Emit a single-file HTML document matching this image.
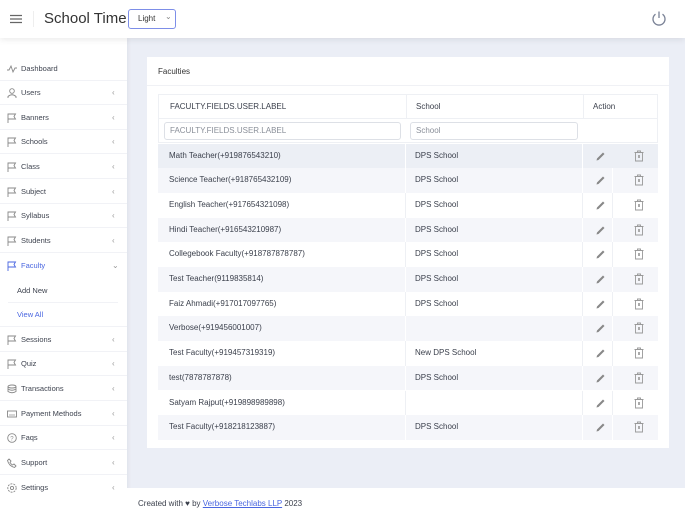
<!DOCTYPE html>
<html style="overflow:hidden;height:515px"><head><meta charset="utf-8"><style>
*{box-sizing:border-box;margin:0;padding:0}
body{width:685px;height:515px;overflow:hidden;background:#ebeef6;font-family:"Liberation Sans",sans-serif;color:#3a3f4b;position:relative}
.hdr{position:absolute;left:0;top:0;width:685px;height:38px;background:#fff;box-shadow:0 2px 6px rgba(0,0,0,.08);z-index:2}
.side{position:absolute;left:0;top:38px;width:127px;height:477px;background:#fff;box-shadow:1px 0 4px rgba(0,0,0,.06)}
.si{position:absolute;left:0;width:127px;height:24px;font-size:7.5px;color:#3f4450;border-bottom:1px solid #f1f2f6;line-height:24px;padding-left:21px}
.si svg{position:absolute;left:7px;top:7px}
.si .ch{position:absolute;left:112px;top:0;color:#999;font-size:8px}
.card{position:absolute;left:147px;top:57px;width:522px;height:391px;background:#fff}
.row{position:absolute;left:158px;width:500px;height:24.7px;font-size:8px;line-height:24.7px}
.c1{position:absolute;left:11px}
.c2{position:absolute;left:257px}
.sep{position:absolute;top:0;bottom:0;width:1px;background:#eef0f4}
.foot{position:absolute;left:127px;top:488px;width:558px;height:27px;background:#fff;font-size:8px;padding-left:11px;line-height:32px;color:#3a3f4b}
</style></head><body>
<div class="hdr">
<svg style="position:absolute;left:10px;top:14px" width="12" height="10"><path d="M0 1.5H12M0 5H12M0 8.5H12" stroke="#666" stroke-width="1.3"/></svg>
<div style="position:absolute;left:33px;top:11px;width:1px;height:16px;background:#eee"></div>
<div style="position:absolute;left:44px;top:10px;font-size:15px;line-height:18px;color:#333;white-space:nowrap">School Time</div>
<div style="position:absolute;left:128px;top:9px;width:48px;height:20px;border:1px solid #7d8ee8;border-radius:3px;font-size:8px;line-height:18px;padding-left:9px;color:#333">Light<span style="position:absolute;left:36px;top:-2px;color:#888;font-size:8px">&#8964;</span></div>
<svg style="position:absolute;left:651px;top:10px" width="16" height="17" viewBox="0 0 16 17"><path d="M4.5 4.2A6 6 0 1 0 11.5 4.2" fill="none" stroke="#7a8296" stroke-width="1.3"/><path d="M8 1.5V8" stroke="#7a8296" stroke-width="1.3"/></svg>
</div>
<div class="side">
<div class="si" style="top:19px"><svg width="10" height="10"><path d="M0 6H2L4 2L6 8L8 4H10" fill="none" stroke="#888" stroke-width="0.9"/></svg>Dashboard</div>
<div class="si" style="top:43px"><svg width="10" height="10"><circle cx="5" cy="3" r="2.3" fill="none" stroke="#888" stroke-width="0.9"/><path d="M1 10V8.5Q5 5 9 8.5V10" fill="none" stroke="#888" stroke-width="0.9"/></svg>Users<span class="ch">‹</span></div>
<div class="si" style="top:68px"><svg width="10" height="10"><path d="M1 10V1H8.5L7 3.5L8.5 6H1" fill="none" stroke="#888" stroke-width="0.9"/></svg>Banners<span class="ch">‹</span></div>
<div class="si" style="top:92px"><svg width="10" height="10"><path d="M1 10V1H8.5L7 3.5L8.5 6H1" fill="none" stroke="#888" stroke-width="0.9"/></svg>Schools<span class="ch">‹</span></div>
<div class="si" style="top:117px"><svg width="10" height="10"><path d="M1 10V1H8.5L7 3.5L8.5 6H1" fill="none" stroke="#888" stroke-width="0.9"/></svg>Class<span class="ch">‹</span></div>
<div class="si" style="top:142px"><svg width="10" height="10"><path d="M1 10V1H8.5L7 3.5L8.5 6H1" fill="none" stroke="#888" stroke-width="0.9"/></svg>Subject<span class="ch">‹</span></div>
<div class="si" style="top:166px"><svg width="10" height="10"><path d="M1 10V1H8.5L7 3.5L8.5 6H1" fill="none" stroke="#888" stroke-width="0.9"/></svg>Syllabus<span class="ch">‹</span></div>
<div class="si" style="top:191px"><svg width="10" height="10"><path d="M1 10V1H8.5L7 3.5L8.5 6H1" fill="none" stroke="#888" stroke-width="0.9"/></svg>Students<span class="ch">‹</span></div>
<div class="si" style="top:216px;color:#4a66e0;border:none"><svg width="10" height="10"><path d="M1 10V1H8.5L7 3.5L8.5 6H1" fill="none" stroke="#4a66e0" stroke-width="0.9"/></svg>Faculty<span class="ch">&#8964;</span></div>
<div class="si" style="top:241px;padding-left:17px;border:none">Add New</div>
<div style="position:absolute;left:8px;top:264px;width:110px;height:1px;background:#f1f2f6"></div>
<div class="si" style="top:265px;padding-left:17px;color:#4a66e0">View All</div>
<div class="si" style="top:290px"><svg width="10" height="10"><path d="M1 10V1H8.5L7 3.5L8.5 6H1" fill="none" stroke="#888" stroke-width="0.9"/></svg>Sessions<span class="ch">‹</span></div>
<div class="si" style="top:314px"><svg width="10" height="10"><path d="M1 10V1H8.5L7 3.5L8.5 6H1" fill="none" stroke="#888" stroke-width="0.9"/></svg>Quiz<span class="ch">‹</span></div>
<div class="si" style="top:339px"><svg width="10" height="10"><ellipse cx="5" cy="2.5" rx="4" ry="1.5" fill="none" stroke="#888" stroke-width="0.9"/><path d="M1 2.5V7.5Q5 10 9 7.5V2.5M1 5Q5 7.5 9 5" fill="none" stroke="#888" stroke-width="0.9"/></svg>Transactions<span class="ch">‹</span></div>
<div class="si" style="top:364px"><svg width="10" height="10"><rect x="0.5" y="2" width="9" height="6" fill="none" stroke="#888" stroke-width="0.9"/><path d="M2 6H8" stroke="#888" stroke-width="0.7"/></svg>Payment Methods<span class="ch">‹</span></div>
<div class="si" style="top:388px"><svg width="10" height="10"><circle cx="5" cy="5" r="4.3" fill="none" stroke="#888" stroke-width="0.9"/><text x="3.3" y="7.5" font-size="6" fill="#888">?</text></svg>Faqs<span class="ch">‹</span></div>
<div class="si" style="top:413px"><svg width="10" height="10"><path d="M2 1L4 3L3 4.5Q4.5 6.5 5.5 7L7 6L9 8L7.5 9.5Q2 8 0.5 2.5Z" fill="none" stroke="#888" stroke-width="0.9"/></svg>Support<span class="ch">‹</span></div>
<div class="si" style="top:438px;border:none"><svg width="10" height="10"><circle cx="5" cy="5" r="4.2" fill="none" stroke="#888" stroke-width="0.9" stroke-dasharray="2 1"/><circle cx="5" cy="5" r="1.6" fill="none" stroke="#888" stroke-width="0.9"/></svg>Settings<span class="ch">‹</span></div>
</div>
<div class="card">
<div style="position:absolute;left:11px;top:10px;font-size:8px;color:#333">Faculties</div>
<div style="position:absolute;left:0;top:28px;width:522px;height:1px;background:#f0f1f5"></div>
</div>
<div class="row" style="top:94px;border:1px solid #eef0f4"><span class="c1">FACULTY.FIELDS.USER.LABEL</span><span class="c2">School</span><span style="position:absolute;left:434px">Action</span><div class="sep" style="left:247px"></div><div class="sep" style="left:424px"></div></div>
<div class="row" style="top:118px;border:1px solid #eef0f4;border-top:none">
<div style="position:absolute;left:5px;top:4px;width:237px;height:18px;border:1px solid #dde0e6;border-radius:3px;line-height:16px;padding-left:5px;color:#8a8f99">FACULTY.FIELDS.USER.LABEL</div>
<div style="position:absolute;left:251px;top:4px;width:168px;height:18px;border:1px solid #dde0e6;border-radius:3px;line-height:16px;padding-left:5px;color:#8a8f99">School</div>
</div>
<div id="rows"></div>
<div class="foot">Created with &#9829; by <span style="color:#4a66e0;text-decoration:underline">Verbose Techlabs LLP</span> 2023</div>
<script>
var d=[["Math Teacher(+919876543210)","DPS School"],["Science Teacher(+918765432109)","DPS School"],["English Teacher(+917654321098)","DPS School"],["Hindi Teacher(+916543210987)","DPS School"],["Collegebook Faculty(+918787878787)","DPS School"],["Test Teacher(9119835814)","DPS School"],["Faiz Ahmadi(+917017097765)","DPS School"],["Verbose(+919456001007)",""],["Test Faculty(+919457319319)","New DPS School"],["test(7878787878)","DPS School"],["Satyam Rajput(+919898989898)",""],["Test Faculty(+918218123887)","DPS School"]];
var pen='<svg style="position:absolute;left:437px;top:7px" width="11" height="11"><path d="M1.5 9.5L2 7.5L8 1.5L9.5 3L3.5 9Z" fill="#888"/></svg>';
var bin='<svg style="position:absolute;left:476px;top:6px" width="10" height="12"><path d="M1.5 2.5H8.5V11H1.5ZM0.5 2.5H9.5M3.5 2.5V1H6.5V2.5" fill="none" stroke="#999" stroke-width="0.9"/><rect x="4" y="5" width="2" height="3" fill="#aaa"/></svg>';
var h='';
d.forEach(function(r,i){var bg=i==0?'#eceff5':(i%2?'#f5f6fa':'#fff');var sc=i%2||i==0?'#fff':'#eef0f4';
h+='<div class="row" style="top:'+(143.5+i*24.7)+'px;background:'+bg+'"><span class="c1">'+r[0]+'</span><span class="c2">'+r[1]+'</span><div class="sep" style="left:247px;background:'+sc+'"></div><div class="sep" style="left:424px;background:'+sc+'"></div>'+(i?'<div class="sep" style="left:454px;background:'+sc+'"></div>':'')+pen+bin+'</div>';});
document.getElementById('rows').innerHTML=h;
</script>
</body></html>
